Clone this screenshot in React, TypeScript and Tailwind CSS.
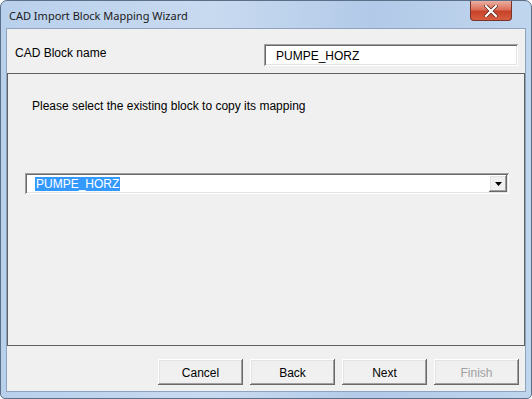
const raised =
  "shadow-[inset_-1px_-1px_#696969,inset_1px_1px_#ffffff,inset_-2px_-2px_#a0a0a0,inset_2px_2px_#e3e3e3]";
const sunken =
  "shadow-[inset_1px_1px_#a0a0a0,inset_-1px_-1px_#ffffff,inset_2px_2px_#696969,inset_-2px_-2px_#e3e3e3]";

const WizardButton = ({ label, disabled }: { label: string; disabled?: boolean }) => (
  <button
    className={`flex h-[26px] w-[85px] items-center justify-center bg-[#f0f0f0] pt-[1px] text-[12px] ${raised} ${
      disabled ? "text-[#a0a0a0]" : "text-black"
    }`}
  >
    {label}
  </button>
);

const CloseButton = () => (
  <div className="flex h-[20px] w-[42px] items-center justify-center rounded-b-[4px] border border-t-0 border-[#7a3328] bg-[linear-gradient(#eab0a2_0%,#dc6f58_45%,#c8432a_55%,#d75d40_100%)]">
    <svg width="14" height="12" viewBox="0 0 14 12">
      <path d="M2 1 L12 11 M12 1 L2 11" stroke="#5a2218" strokeWidth="3.6" strokeLinecap="square" />
      <path d="M2 1 L12 11 M12 1 L2 11" stroke="#ffffff" strokeWidth="2.2" strokeLinecap="square" />
    </svg>
  </div>
);

export default function App() {
  return (
    <div className="h-[399px] w-[532px] overflow-hidden bg-white font-['Liberation_Sans',Arial,sans-serif] text-[12px] text-black">
      <div className="flex h-full w-full flex-col rounded-t-[7px] rounded-b-[5px] border border-[#5c6f86] bg-[linear-gradient(90deg,#b9d0ec_0%,#c8daf0_40%,#b2cae8_70%,#c0d5ee_100%)]">
        {/* title bar */}
        <div className="flex h-[27px] shrink-0 items-start justify-between pl-[8px] pr-[19px]">
          <span className="pt-[7px] font-['Noto_Sans',sans-serif] text-[11px] leading-[15px] text-[#1a1a1a]">
            CAD Import Block Mapping Wizard
          </span>
          <CloseButton />
        </div>

        {/* client area */}
        <div className="mx-[5px] flex flex-1 flex-col border border-[#8ea3be] bg-[#f0f0f0]">
          <div className="flex h-[44px] shrink-0 items-start justify-between pl-[8px] pr-[7px] pt-[15px]">
            <span className="pt-[2px] leading-[14px]">CAD Block name</span>
            <div className={`flex h-[22px] w-[254px] items-center bg-white pl-[12px] pt-[1px] ${sunken}`}>
              PUMPE_HORZ
            </div>
          </div>

          <div className="flex h-[273px] shrink-0 flex-col border border-[#5f5f5f]">
            <p className="pl-[24px] pt-[25px] leading-[14px]">
              Please select the existing block to copy its mapping
            </p>
            <div
              className={`ml-[17px] mr-[15px] mt-[60px] flex h-[21px] items-center justify-between bg-white pl-[10px] pr-[2px] ${sunken}`}
            >
              <span className="bg-[#3399ff] px-[1px] leading-[14px] text-white">PUMPE_HORZ</span>
              <div className={`flex h-[17px] w-[18px] items-center justify-center bg-[#f0f0f0] ${raised}`}>
                <svg width="7" height="4" viewBox="0 0 7 4">
                  <path d="M0 0 H7 L3.5 4 Z" fill="#000" />
                </svg>
              </div>
            </div>
          </div>

          <div className="flex flex-1 items-start justify-end gap-[7px] pr-[6px] pt-[13px]">
            <WizardButton label="Cancel" />
            <WizardButton label="Back" />
            <WizardButton label="Next" />
            <WizardButton label="Finish" disabled />
          </div>
        </div>

        <div className="h-[6px] shrink-0" />
      </div>
    </div>
  );
}
